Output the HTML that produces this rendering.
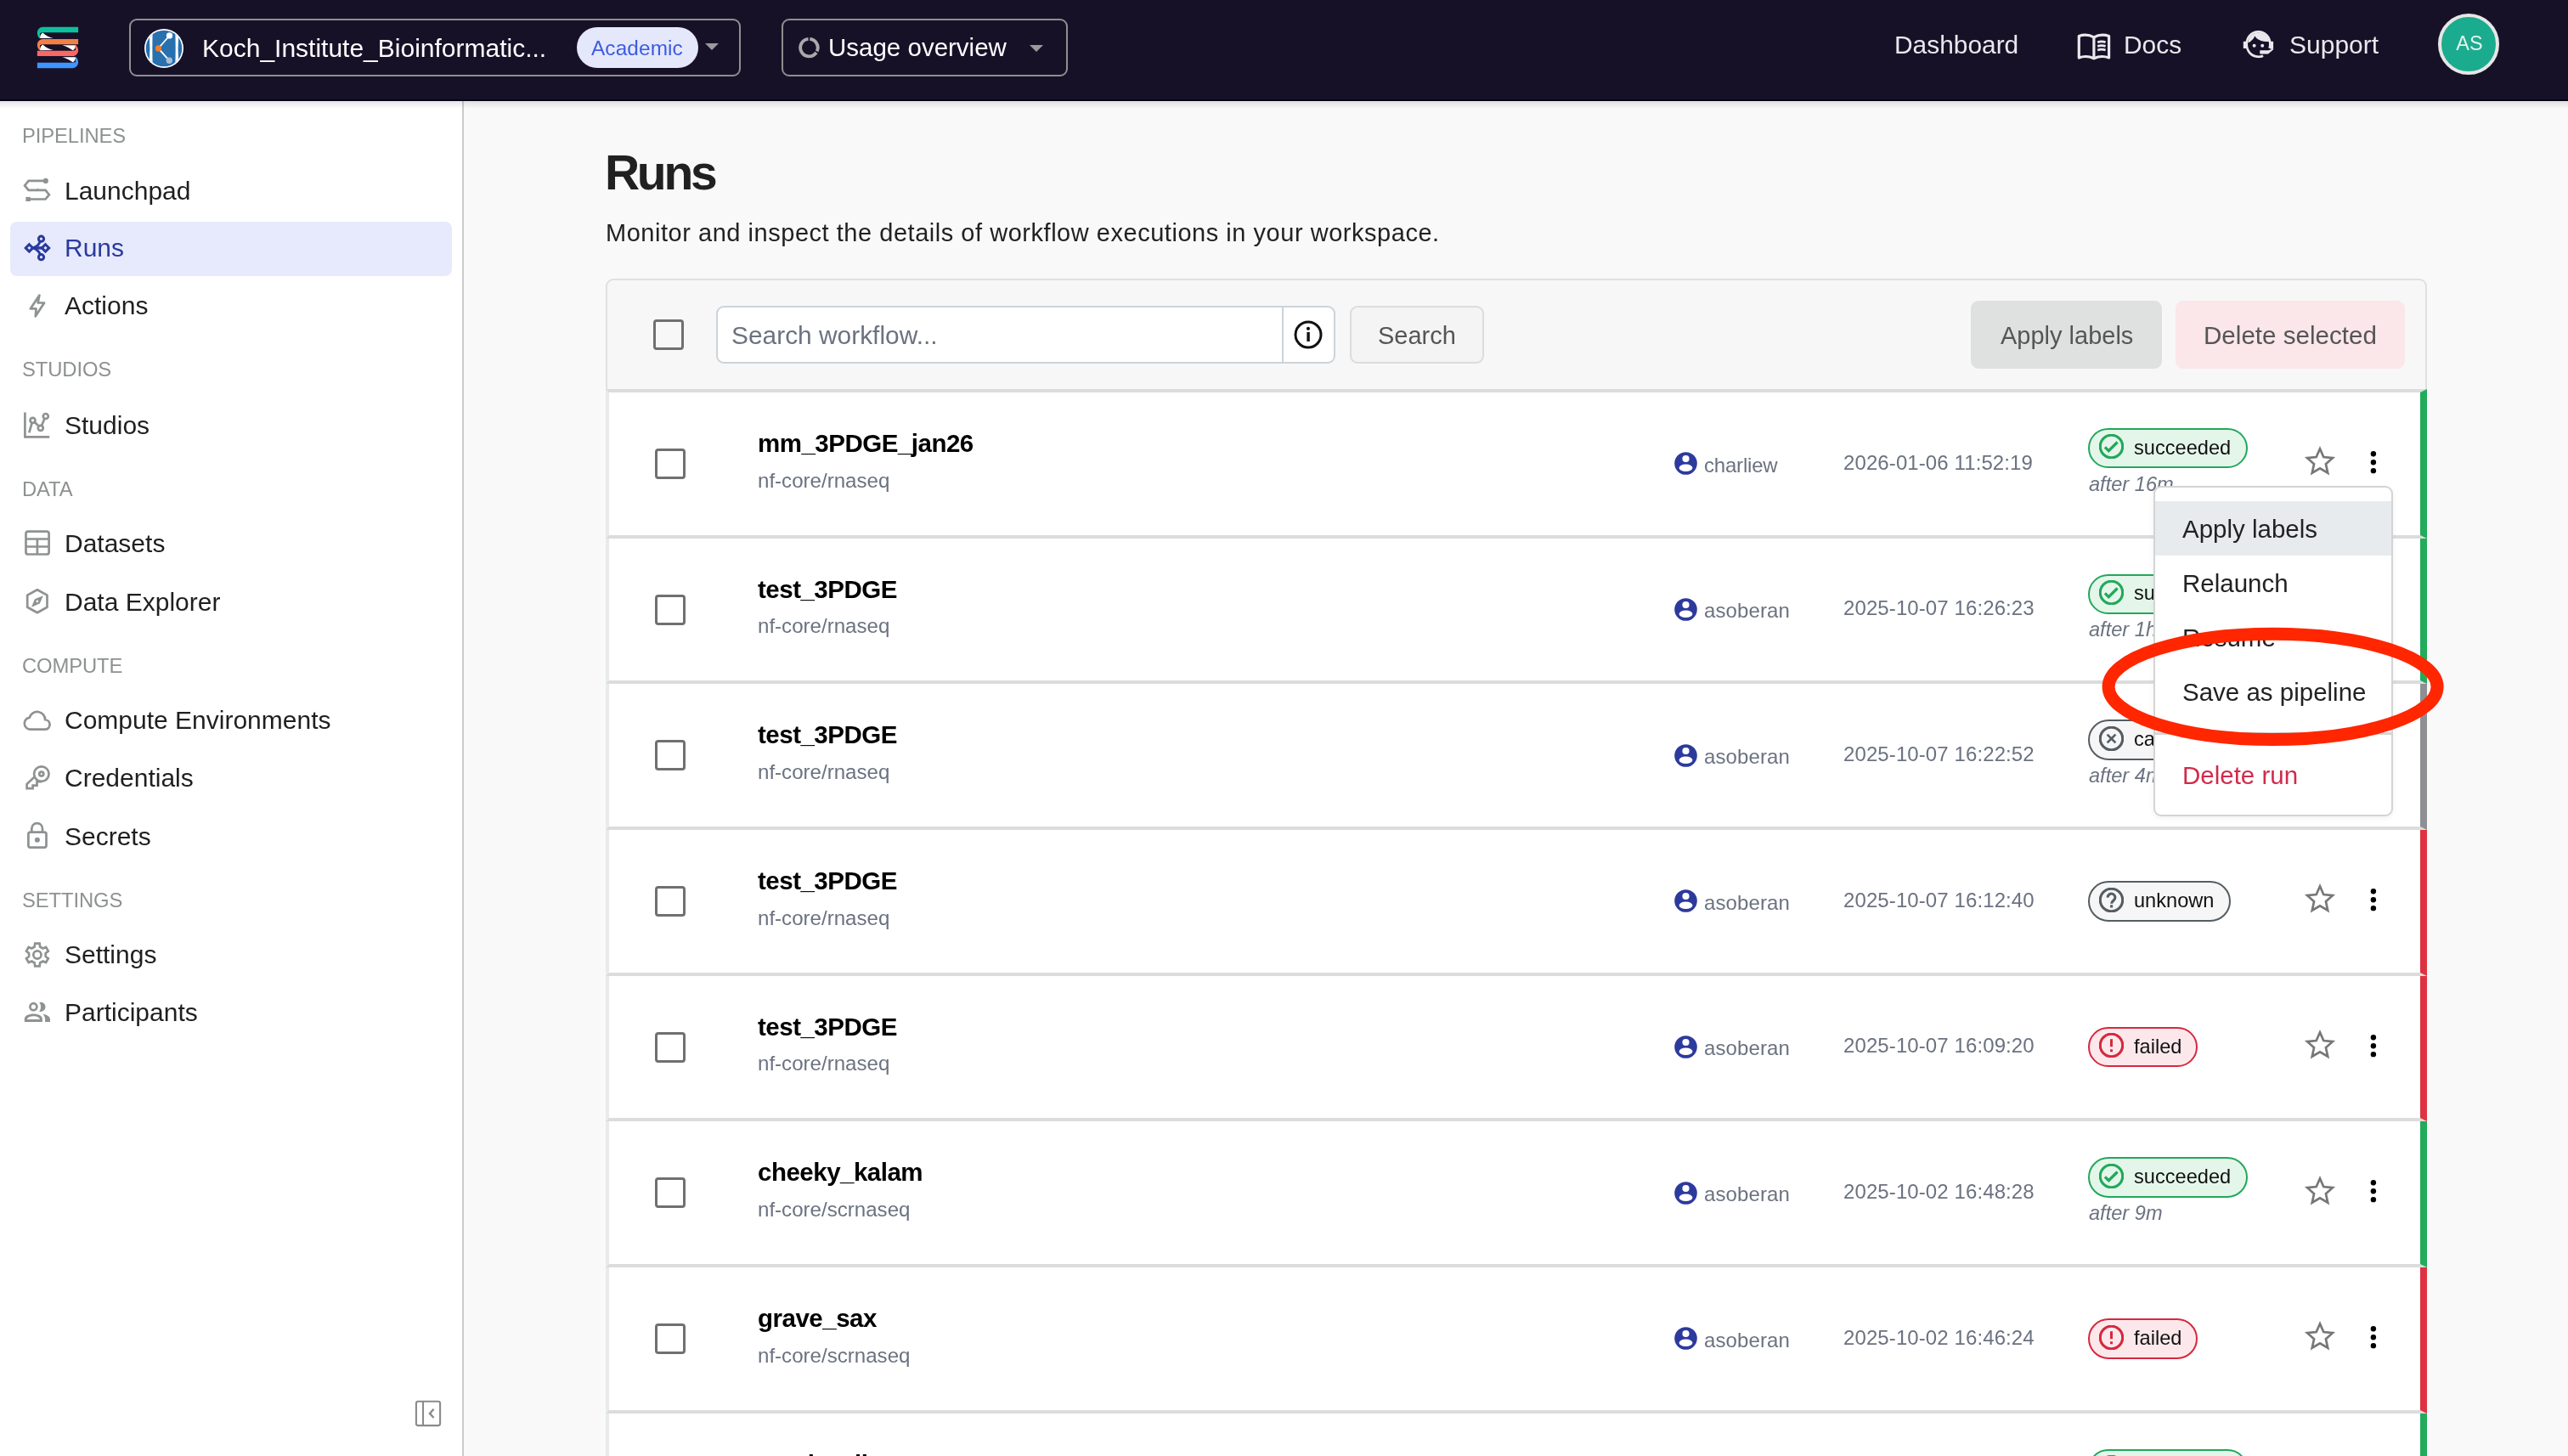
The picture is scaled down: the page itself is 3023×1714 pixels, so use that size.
<!DOCTYPE html>
<html><head><meta charset="utf-8"><style>
html,body{margin:0;padding:0;width:3023px;height:1714px;overflow:hidden;background:#f9f9f9}
.t{position:absolute;white-space:nowrap;line-height:1;font-family:"Liberation Sans", sans-serif;will-change:transform}
svg{display:block}
</style></head><body>
<div style="position:absolute;left:0.00px;top:0.00px;width:3023.00px;height:1714.00px;background:#f9f9f9"></div>
<div style="position:absolute;left:0.00px;top:119.00px;width:544.00px;height:1595.00px;background:#ffffff"></div>
<div style="position:absolute;left:544.00px;top:119.00px;width:2.00px;height:1595.00px;background:#cbcccd"></div>
<div style="position:absolute;left:0.00px;top:119.00px;width:3023.00px;height:9.00px;background:linear-gradient(rgba(0,0,0,0.10),rgba(0,0,0,0))"></div>
<div style="position:absolute;left:0.00px;top:0.00px;width:3023.00px;height:119.00px;background:#171128"></div>
<div style="position:absolute;left:0.00px;top:117.00px;width:3023.00px;height:2.00px;background:#07031a"></div>
<svg style="position:absolute;left:40.00px;top:28.00px;" width="56" height="56" viewBox="0 0 56 56">
<g>
<path d="M52.1 3.85H10.6C6.8 3.85 3.85 6.9 3.85 10.7C3.85 13.6 5.1 16 7 17.3V11.2C7.9 10.5 9.1 10.2 10.6 10.2H52.1Z" fill="#0dc09d"/>
<path d="M10.3 10.4Q15.2 15 22.6 16.95L7.1 17.1Q6.9 12.6 10.3 10.4Z" fill="#ffffff"/>
<path d="M52.1 17.9H10.6C6.8 17.9 3.85 20.95 3.85 24.75C3.85 27.65 5.1 30.05 7 31.35V25.25C7.9 24.55 9.1 24.25 10.6 24.25H52.1Z" fill="#f18046"/>
<path d="M10.3 24.45Q15.2 29.05 22.6 31L7.1 31.15Q6.9 26.65 10.3 24.45Z" fill="#ffffff"/>
<path d="M3.85 38.1H45.4C49.2 38.1 52.1 35.0 52.1 31.2C52.1 28.3 50.9 26.0 49 24.7V30.8C48.1 31.5 46.9 31.7 45.4 31.7H3.85Z" fill="#fa6863"/>
<path d="M33.4 25.15L48.9 25.3Q49.1 29.6 45.7 31.3Q41.2 27.6 33.4 25.15Z" fill="#ffffff"/>
<path d="M3.85 52.15H45.4C49.2 52.15 52.1 49.05 52.1 45.25C52.1 42.35 50.9 40.05 49 38.75V44.85C48.1 45.55 46.9 45.75 45.4 45.75H3.85Z" fill="#3d95fd"/>
<path d="M33.4 39.2L48.9 39.35Q49.1 43.65 45.7 45.35Q41.2 41.65 33.4 39.2Z" fill="#ffffff"/>
</g></svg>
<div style="position:absolute;left:152.00px;top:22.00px;width:720.00px;height:68.00px;box-sizing:border-box;border:2px solid #8f8f8f;border-radius:9px"></div>
<svg style="position:absolute;left:166.00px;top:30.00px;" width="54" height="54" viewBox="0 0 54 54">
<circle cx="27" cy="27" r="23" fill="#ffffff"/>
<clipPath id="oc"><circle cx="27" cy="27" r="21.3"/></clipPath>
<g clip-path="url(#oc)">
<rect x="0" y="0" width="54" height="54" fill="#2870ae"/>
<path d="M8.6 4Q12.2 27 8.6 50L13.8 50Q12.9 27 13.8 4Z" fill="#fff"/>
<path d="M45.4 4Q41.8 27 45.4 50L40.2 50Q41.1 27 40.2 4Z" fill="#fff"/>
</g>
<path d="M33.5 12L20.4 26.9L33.3 41.3" stroke="#fff" stroke-width="1.8" fill="none"/>
<circle cx="20.4" cy="26.9" r="3.6" fill="#f07c2a"/>
<circle cx="33.5" cy="11.9" r="3.7" fill="#ffffff"/>
<circle cx="33.3" cy="41.3" r="3.7" fill="#a9bdd6"/>
</svg>
<div class="t" style="left:238.00px;top:41.91px;font-size:30px;color:#ffffff;font-weight:400;">Koch_Institute_Bioinformatic...</div>
<div style="position:absolute;left:679.00px;top:32.00px;width:143.00px;height:48.00px;background:#e5e8fb;border-radius:24px"></div>
<div class="t" style="left:696.00px;top:44.95px;font-size:24.4px;color:#3d5ce0;font-weight:400;letter-spacing:0.1px">Academic</div>
<svg style="position:absolute;left:828.00px;top:49.00px;" width="20" height="12" viewBox="0 0 20 12"><path d="M2 2H18L10 10Z" fill="#9a9a9a"/></svg>
<div style="position:absolute;left:920.00px;top:22.00px;width:337.00px;height:68.00px;box-sizing:border-box;border:2px solid #8f8f8f;border-radius:9px"></div>
<svg style="position:absolute;left:932.00px;top:36.00px;" width="40" height="40" viewBox="0 0 40 40"><path d="M21.29 9.89A10.25 10.25 0 0 1 29.69 24.43 M28.90 25.83A10.25 10.25 0 1 1 19.51 9.89" stroke="#a8a9ab" stroke-width="3.9" fill="none"/></svg>
<div class="t" style="left:974.50px;top:41.23px;font-size:29.5px;color:#ffffff;font-weight:400;">Usage overview</div>
<svg style="position:absolute;left:1210.00px;top:51.00px;" width="20" height="12" viewBox="0 0 20 12"><path d="M2 2H18L10 10Z" fill="#9a9a9a"/></svg>
<div class="t" style="left:2229.80px;top:37.89px;font-size:29.9px;color:#e9e8ec;font-weight:400;">Dashboard</div>
<svg style="position:absolute;left:2436.00px;top:30.80px;" width="60" height="46" viewBox="0 0 60 46"><g fill="none" stroke="#e9e8ec" stroke-width="3.2" stroke-linejoin="round">
<path d="M11.3 11.5C16.5 9.6 23 9.6 28.9 12.8C34.8 9.6 41.3 9.6 46.6 11.5V37C41.3 35 34.8 35 28.9 37.8C23 35 16.5 35 11.3 37Z"/>
<path d="M28.9 12.8V37.5"/>
<path d="M33.2 18.8C36.3 17.7 39.6 17.7 42.6 18.8M33.2 23.4C36.3 22.3 39.6 22.3 42.6 23.4M33.2 28C36.3 26.9 39.6 26.9 42.6 28" stroke-width="2.8"/>
</g></svg>
<div class="t" style="left:2499.80px;top:37.89px;font-size:29.9px;color:#e9e8ec;font-weight:400;">Docs</div>
<svg style="position:absolute;left:2634.00px;top:28.00px;" width="50" height="48" viewBox="0 0 50 48"><g fill="#e9e8ec">
<path d="M24.5 8C15.6 8 9.4 15.2 9.4 24C9.4 32.8 15.6 40.2 24.5 40.2C27 40.2 28.8 39.8 30.6 39L29.6 36.5C28 37.1 26.4 37.4 24.5 37.4C17.2 37.4 12 31.3 12 24C12 16.7 17.2 10.7 24.5 10.7C31.8 10.7 37 16.7 37 24C37 25.5 36.8 27 36.3 28.4L39 29.3C39.5 27.6 39.8 25.8 39.8 24C39.8 15.2 33.4 8 24.5 8Z"/>
<path d="M12.3 22.6C15.8 21 18.6 18.3 20.3 14.5C23.3 19 28.8 21.2 37 21.1C36.2 14.8 31 10.5 24.5 10.5C18 10.5 12.8 15.2 12.3 22.6Z"/>
<rect x="6.8" y="20.8" width="3.3" height="8.2"/>
<rect x="38.8" y="20.8" width="3.3" height="9"/>
<path d="M26.3 31.2H36.5L42 29.2V30.6L36 35.4H26.3Z"/>
<circle cx="19.6" cy="25.8" r="2"/><circle cx="29.2" cy="25.8" r="2"/>
</g></svg>
<div class="t" style="left:2694.50px;top:37.81px;font-size:30px;color:#e9e8ec;font-weight:400;">Support</div>
<div style="position:absolute;left:2870.00px;top:16.00px;width:72.00px;height:72.00px;box-sizing:border-box;border:4px solid #e6e6e6;border-radius:50%;background:#1bab8e"></div>
<div class="t" style="left:2870.50px;top:40.41px;font-size:23.5px;color:#e3f3ee;font-weight:400;width:72px;text-align:center">AS</div>
<div class="t" style="left:26.00px;top:147.85px;font-size:23.8px;color:#8e9191;font-weight:400;letter-spacing:-0.1px">PIPELINES</div>
<div class="t" style="left:26.00px;top:423.15px;font-size:23.8px;color:#8e9191;font-weight:400;letter-spacing:-0.1px">STUDIOS</div>
<div class="t" style="left:26.00px;top:564.05px;font-size:23.8px;color:#8e9191;font-weight:400;letter-spacing:-0.1px">DATA</div>
<div class="t" style="left:26.00px;top:772.15px;font-size:23.8px;color:#8e9191;font-weight:400;letter-spacing:-0.1px">COMPUTE</div>
<div class="t" style="left:26.00px;top:1047.65px;font-size:23.8px;color:#8e9191;font-weight:400;letter-spacing:-0.1px">SETTINGS</div>
<div style="position:absolute;left:12.00px;top:261.00px;width:520.00px;height:64.00px;background:#e7eafc;border-radius:8px"></div>
<div class="t" style="left:76.00px;top:209.60px;font-size:30px;color:#1f1f1f;font-weight:400;">Launchpad</div>
<div class="t" style="left:76.00px;top:277.21px;font-size:30px;color:#2b3a9e;font-weight:400;">Runs</div>
<div class="t" style="left:76.00px;top:345.00px;font-size:30px;color:#1f1f1f;font-weight:400;">Actions</div>
<div class="t" style="left:76.00px;top:485.81px;font-size:30px;color:#1f1f1f;font-weight:400;">Studios</div>
<div class="t" style="left:76.00px;top:625.11px;font-size:30px;color:#1f1f1f;font-weight:400;">Datasets</div>
<div class="t" style="left:76.00px;top:693.90px;font-size:30px;color:#1f1f1f;font-weight:400;">Data Explorer</div>
<div class="t" style="left:76.00px;top:833.21px;font-size:30px;color:#1f1f1f;font-weight:400;">Compute Environments</div>
<div class="t" style="left:76.00px;top:901.21px;font-size:30px;color:#1f1f1f;font-weight:400;">Credentials</div>
<div class="t" style="left:76.00px;top:969.61px;font-size:30px;color:#1f1f1f;font-weight:400;">Secrets</div>
<div class="t" style="left:76.00px;top:1109.20px;font-size:30px;color:#1f1f1f;font-weight:400;">Settings</div>
<div class="t" style="left:76.00px;top:1177.31px;font-size:30px;color:#1f1f1f;font-weight:400;">Participants</div>
<svg style="position:absolute;left:20.00px;top:200.00px;" width="50" height="50" viewBox="0 0 50 50"><g fill="none" stroke="#8f9292" stroke-width="2.7" stroke-linejoin="miter"><path d="M33 12.9H13.6L9.1 18.4L13.6 23.8H33.5L37.9 29.2L33.5 34.5H15"/></g><circle cx="33.8" cy="12.9" r="3.1" fill="#8f9292"/><rect x="10.4" y="31.9" width="5.4" height="5.1" fill="#8f9292"/><path d="M23.8 21.2L26.5 23.8L23.5 25.5Z" fill="#8f9292"/></svg>
<svg style="position:absolute;left:20.00px;top:268.00px;" width="50" height="50" viewBox="0 0 50 50"><g fill="none" stroke="#2b3a9e" stroke-width="3"><circle cx="28.5" cy="13.2" r="3.1"/><circle cx="28.5" cy="34.7" r="3.1"/><path d="M14.4 19.7L18.6 23.9L14.4 28.1L10.2 23.9Z"/><path d="M33.5 19.7L37.7 23.9L33.5 28.1L29.3 23.9Z"/><path d="M18.6 23.9H29.3" stroke-width="3.4"/><path d="M18.8 23.9C22.5 22.5 26.2 21 27 16.2M18.8 23.9C22.5 25.3 26.2 26.8 27 31.6" stroke-width="3"/></g></svg>
<svg style="position:absolute;left:20.00px;top:340.00px;" width="50" height="50" viewBox="0 0 50 50"><path d="M26.4 7.6L24.6 16.5H32.1L21.8 32.3L22.5 23.4H15.8Z" fill="none" stroke="#8f9292" stroke-width="2.7" stroke-linejoin="round"/></svg>
<svg style="position:absolute;left:20.00px;top:478.00px;" width="50" height="50" viewBox="0 0 50 50"><g fill="none" stroke="#8f9292" stroke-width="2.7"><path d="M9.4 7.4V36.4H38.3"/><path d="M14.3 31.4L17.6 19.8M20.5 18.7L25.8 23.8M29 23.2L32.5 14.6"/><circle cx="18.5" cy="16.8" r="3"/><circle cx="27.8" cy="25.9" r="3"/><circle cx="33.8" cy="12" r="3"/></g></svg>
<svg style="position:absolute;left:20.00px;top:616.00px;" width="50" height="50" viewBox="0 0 50 50"><g fill="none" stroke="#8f9292" stroke-width="2.7"><rect x="10.5" y="9.6" width="27.1" height="26.9" rx="2.6"/><path d="M10.5 18.5H37.6M10.5 27.5H37.6M23.9 18.5V36.5"/></g></svg>
<svg style="position:absolute;left:20.00px;top:684.00px;" width="50" height="50" viewBox="0 0 50 50"><path d="M23.9 10.3L35.5 16.6V30.8L23.9 37.2L12.2 30.8V16.6Z" fill="none" stroke="#8f9292" stroke-width="2.7" stroke-linejoin="round"/><path d="M30.9 17.2L26.8 26.6L17 30.7L20.9 21.3Z" fill="#8f9292"/><circle cx="23.9" cy="23.9" r="1.3" fill="#fff"/></svg>
<svg style="position:absolute;left:20.00px;top:822.00px;" width="50" height="50" viewBox="0 0 50 50"><path d="M15.5 36.7H33.5A5.75 5.75 0 0 0 33.2 25.25A9.4 9.4 0 0 0 14.8 22.6A7.1 7.1 0 0 0 15.5 36.7Z" fill="none" stroke="#8f9292" stroke-width="2.7" stroke-linejoin="miter"/></svg>
<svg style="position:absolute;left:20.00px;top:890.00px;" width="50" height="50" viewBox="0 0 50 50"><g fill="none" stroke="#8f9292" stroke-width="2.7"><circle cx="28.8" cy="21.1" r="8.75"/><circle cx="28.8" cy="21.1" r="2.5"/><path d="M20.9 24.3L11.6 33V38.2H18.6V34.6H23.5V30.1H28.8" stroke-linejoin="miter"/></g></svg>
<svg style="position:absolute;left:20.00px;top:958.00px;" width="50" height="50" viewBox="0 0 50 50"><g fill="none" stroke="#8f9292" stroke-width="2.7"><rect x="13.4" y="21.6" width="21.1" height="18" rx="2.4"/><path d="M17.3 21.6V17.4A6.35 6.35 0 0 1 30 17.4V21.6"/></g><circle cx="23.9" cy="30.7" r="3" fill="#8f9292"/></svg>
<svg style="position:absolute;left:20.00px;top:1100.00px;" width="50" height="50" viewBox="0 0 50 50"><g fill="none" stroke="#8f9292" stroke-width="2.7" stroke-linejoin="miter"><path d="M20.64 14.54L21.19 10.67L26.61 10.67L27.16 14.54L30.46 16.45L34.09 14.99L36.80 19.68L33.72 22.09L33.72 25.91L36.80 28.32L34.09 33.01L30.46 31.55L27.16 33.46L26.61 37.33L21.19 37.33L20.64 33.46L17.34 31.55L13.71 33.01L11.00 28.32L14.08 25.91L14.08 22.09L11.00 19.68L13.71 14.99L17.34 16.45Z"/><circle cx="23.9" cy="24" r="4.6"/></g></svg>
<svg style="position:absolute;left:20.00px;top:1168.00px;" width="50" height="50" viewBox="0 0 50 50"><g fill="#8f9292"><circle cx="19.4" cy="17.2" r="4" fill="none" stroke="#8f9292" stroke-width="2.7"/><path d="M26.3 12A5.6 5.6 0 1 1 26.3 22.7A9.5 9.5 0 0 0 26.3 12Z"/><path d="M8.8 34.9V31.8C8.8 27.8 13.6 25.6 19.4 25.6C25.2 25.6 29.9 27.8 29.9 31.8V34.9ZM11.6 32.1H27.1C26.4 29.6 23.4 28.3 19.4 28.3C15.4 28.3 12.4 29.6 11.6 32.1Z" fill-rule="evenodd"/><path d="M30.2 25.6C35.5 26.5 39 29 39 32V34.9H33.1V32.3C33.1 29.8 32.3 27.5 30.2 25.6Z"/></g></svg>
<svg style="position:absolute;left:480.00px;top:1640.00px;" width="50" height="50" viewBox="0 0 50 50"><g fill="none" stroke="#8a8a8a" stroke-width="2.1"><rect x="9.9" y="9.8" width="28.2" height="28.3" rx="2.4"/><path d="M18 9.8V38.1"/><path d="M30.6 18.7L25.9 23.9L30.6 29" stroke-width="2.4"/></g></svg>
<div class="t" style="left:711.60px;top:174.75px;font-size:57px;color:#212121;font-weight:700;letter-spacing:-3.3px">Runs</div>
<div class="t" style="left:713.00px;top:260.05px;font-size:29px;color:#222222;font-weight:400;letter-spacing:0.53px">Monitor and inspect the details of workflow executions in your workspace.</div>
<div style="position:absolute;left:713.00px;top:328.00px;width:2144.00px;height:132.00px;box-sizing:border-box;background:#f7f7f7;border:2px solid #e0e0e0;border-bottom:none;border-radius:9px 9px 0 0"></div>
<div style="position:absolute;left:769.00px;top:376.00px;width:36.00px;height:36.00px;box-sizing:border-box;border:3.5px solid #707070;border-radius:4px"></div>
<div style="position:absolute;left:843.00px;top:360.00px;width:668.00px;height:67.50px;box-sizing:border-box;background:#fff;border:2px solid #ccd3da;border-radius:9px 0 0 9px"></div>
<div class="t" style="left:860.80px;top:380.09px;font-size:29.9px;color:#6b7280;font-weight:400;">Search workflow...</div>
<div style="position:absolute;left:1509.00px;top:360.00px;width:63.00px;height:67.50px;box-sizing:border-box;background:#fff;border:2px solid #ccd3da;border-radius:0 9px 9px 0"></div>
<svg style="position:absolute;left:1522.00px;top:376.00px;" width="36" height="36" viewBox="0 0 36 36"><circle cx="18" cy="18" r="15" fill="none" stroke="#111" stroke-width="3"/><rect x="16.4" y="15" width="3.4" height="11" fill="#111"/><circle cx="18" cy="10.8" r="2.1" fill="#111"/></svg>
<div style="position:absolute;left:1589.00px;top:360.00px;width:158.00px;height:67.50px;box-sizing:border-box;background:#f4f4f4;border:2px solid #dcdcdc;border-radius:9px"></div>
<div class="t" style="left:1622.00px;top:380.65px;font-size:29px;color:#555555;font-weight:400;">Search</div>
<div style="position:absolute;left:2320.00px;top:354.00px;width:225.00px;height:80.00px;background:#dfe0e0;border-radius:9px"></div>
<div class="t" style="left:2354.50px;top:380.95px;font-size:29px;color:#555555;font-weight:400;">Apply labels</div>
<div style="position:absolute;left:2561.00px;top:354.00px;width:270.00px;height:80.00px;background:#fbe6e9;border-radius:9px"></div>
<div class="t" style="left:2594.00px;top:380.44px;font-size:29.6px;color:#555555;font-weight:400;">Delete selected</div>
<div style="position:absolute;left:713.00px;top:458.00px;width:2144.00px;height:175.67px;box-sizing:border-box;background:#ffffff;border-left:4px solid #e7ebee;border-right:8px solid #22ab5b;border-bottom:4px solid #dcdcdc;border-top:4px solid #dcdcdc"></div>
<div style="position:absolute;left:771.00px;top:528.13px;width:36.00px;height:36.00px;box-sizing:border-box;border:3.5px solid #707070;border-radius:4px"></div>
<div class="t" style="left:892.00px;top:507.06px;font-size:29.5px;color:#000000;font-weight:700;letter-spacing:-0.5px">mm_3PDGE_jan26</div>
<div class="t" style="left:892.00px;top:553.63px;font-size:24.1px;color:#6b7280;font-weight:400;">nf-core/rnaseq</div>
<svg style="position:absolute;left:1971.00px;top:532.33px;" width="27" height="27" viewBox="0 0 27 27"><circle cx="13.5" cy="13.5" r="13.3" fill="#2d3a9d"/><circle cx="13.5" cy="8" r="4.1" fill="#fff"/><ellipse cx="13.5" cy="18.7" rx="7.9" ry="4.3" fill="#fff"/></svg>
<div class="t" style="left:2006.30px;top:535.72px;font-size:24px;color:#6b7280;font-weight:400;letter-spacing:-0.2px">charliew</div>
<div class="t" style="left:2169.80px;top:532.82px;font-size:24px;color:#6b7280;font-weight:400;letter-spacing:0.1px">2026-01-06 11:52:19</div>
<div style="position:absolute;left:2458.00px;top:503.83px;width:188.00px;height:47.50px;box-sizing:border-box;background:#e4f6ea;border:2.6px solid #22a85a;border-radius:24px"></div>
<svg style="position:absolute;left:2471.30px;top:511.33px;" width="29" height="29" viewBox="0 0 29 29"><circle cx="14.5" cy="14.5" r="13.25" fill="none" stroke="#22a85a" stroke-width="3.2"/><path d="M6.9 15.35L11.3 19.65L21.6 9.55" fill="none" stroke="#22a85a" stroke-width="3.3"/></svg>
<div class="t" style="left:2512.40px;top:515.66px;font-size:23.6px;color:#111;font-weight:400;">succeeded</div>
<div class="t" style="left:2458.50px;top:558.66px;font-size:23.6px;color:#6b7280;font-weight:400;font-style:italic">after 16m</div>
<svg style="position:absolute;left:2711.30px;top:524.23px;" width="40" height="40" viewBox="0 0 40 40"><path d="M20.00 4.30L24.29 14.09L34.93 15.15L26.94 22.26L29.23 32.70L20.00 27.30L10.77 32.70L13.06 22.26L5.07 15.15L15.71 14.09Z" fill="none" stroke="#777777" stroke-width="2.7" stroke-miterlimit="10"/></svg>
<svg style="position:absolute;left:2786.80px;top:528.83px;" width="14" height="32" viewBox="0 0 14 32"><circle cx="6.9" cy="5.25" r="3.2" fill="#000"/><circle cx="6.9" cy="15.2" r="3.2" fill="#000"/><circle cx="6.9" cy="25.15" r="3.2" fill="#000"/></svg>
<div style="position:absolute;left:713.00px;top:633.67px;width:2144.00px;height:171.67px;box-sizing:border-box;background:#ffffff;border-left:4px solid #e7ebee;border-right:8px solid #22ab5b;border-bottom:4px solid #dcdcdc"></div>
<div style="position:absolute;left:771.00px;top:699.80px;width:36.00px;height:36.00px;box-sizing:border-box;border:3.5px solid #707070;border-radius:4px"></div>
<div class="t" style="left:892.00px;top:678.73px;font-size:29.5px;color:#000000;font-weight:700;letter-spacing:-0.5px">test_3PDGE</div>
<div class="t" style="left:892.00px;top:725.30px;font-size:24.1px;color:#6b7280;font-weight:400;">nf-core/rnaseq</div>
<svg style="position:absolute;left:1971.00px;top:704.00px;" width="27" height="27" viewBox="0 0 27 27"><circle cx="13.5" cy="13.5" r="13.3" fill="#2d3a9d"/><circle cx="13.5" cy="8" r="4.1" fill="#fff"/><ellipse cx="13.5" cy="18.7" rx="7.9" ry="4.3" fill="#fff"/></svg>
<div class="t" style="left:2006.30px;top:707.38px;font-size:24px;color:#6b7280;font-weight:400;letter-spacing:0.1px">asoberan</div>
<div class="t" style="left:2169.80px;top:704.48px;font-size:24px;color:#6b7280;font-weight:400;letter-spacing:0.1px">2025-10-07 16:26:23</div>
<div style="position:absolute;left:2458.00px;top:675.50px;width:188.00px;height:47.50px;box-sizing:border-box;background:#e4f6ea;border:2.6px solid #22a85a;border-radius:24px"></div>
<svg style="position:absolute;left:2471.30px;top:683.00px;" width="29" height="29" viewBox="0 0 29 29"><circle cx="14.5" cy="14.5" r="13.25" fill="none" stroke="#22a85a" stroke-width="3.2"/><path d="M6.9 15.35L11.3 19.65L21.6 9.55" fill="none" stroke="#22a85a" stroke-width="3.3"/></svg>
<div class="t" style="left:2512.40px;top:687.32px;font-size:23.6px;color:#111;font-weight:400;">succeeded</div>
<div class="t" style="left:2458.50px;top:730.32px;font-size:23.6px;color:#6b7280;font-weight:400;font-style:italic">after 1h</div>
<svg style="position:absolute;left:2711.30px;top:695.90px;" width="40" height="40" viewBox="0 0 40 40"><path d="M20.00 4.30L24.29 14.09L34.93 15.15L26.94 22.26L29.23 32.70L20.00 27.30L10.77 32.70L13.06 22.26L5.07 15.15L15.71 14.09Z" fill="none" stroke="#777777" stroke-width="2.7" stroke-miterlimit="10"/></svg>
<svg style="position:absolute;left:2786.80px;top:700.50px;" width="14" height="32" viewBox="0 0 14 32"><circle cx="6.9" cy="5.25" r="3.2" fill="#000"/><circle cx="6.9" cy="15.2" r="3.2" fill="#000"/><circle cx="6.9" cy="25.15" r="3.2" fill="#000"/></svg>
<div style="position:absolute;left:713.00px;top:805.33px;width:2144.00px;height:171.67px;box-sizing:border-box;background:#ffffff;border-left:4px solid #e7ebee;border-right:8px solid #8e8f93;border-bottom:4px solid #dcdcdc"></div>
<div style="position:absolute;left:771.00px;top:871.47px;width:36.00px;height:36.00px;box-sizing:border-box;border:3.5px solid #707070;border-radius:4px"></div>
<div class="t" style="left:892.00px;top:850.39px;font-size:29.5px;color:#000000;font-weight:700;letter-spacing:-0.5px">test_3PDGE</div>
<div class="t" style="left:892.00px;top:896.97px;font-size:24.1px;color:#6b7280;font-weight:400;">nf-core/rnaseq</div>
<svg style="position:absolute;left:1971.00px;top:875.67px;" width="27" height="27" viewBox="0 0 27 27"><circle cx="13.5" cy="13.5" r="13.3" fill="#2d3a9d"/><circle cx="13.5" cy="8" r="4.1" fill="#fff"/><ellipse cx="13.5" cy="18.7" rx="7.9" ry="4.3" fill="#fff"/></svg>
<div class="t" style="left:2006.30px;top:879.05px;font-size:24px;color:#6b7280;font-weight:400;letter-spacing:0.1px">asoberan</div>
<div class="t" style="left:2169.80px;top:876.15px;font-size:24px;color:#6b7280;font-weight:400;letter-spacing:0.1px">2025-10-07 16:22:52</div>
<div style="position:absolute;left:2458.00px;top:847.17px;width:186.00px;height:47.50px;box-sizing:border-box;background:#f6f6f6;border:2.6px solid #555d63;border-radius:24px"></div>
<svg style="position:absolute;left:2471.30px;top:854.67px;" width="29" height="29" viewBox="0 0 29 29"><circle cx="14.5" cy="14.5" r="13.25" fill="none" stroke="#555d63" stroke-width="3.2"/><path d="M9.6 9.6L19.4 19.4M19.4 9.6L9.6 19.4" fill="none" stroke="#555d63" stroke-width="2.7"/></svg>
<div class="t" style="left:2512.40px;top:858.99px;font-size:23.6px;color:#111;font-weight:400;">cancelled</div>
<div class="t" style="left:2458.50px;top:901.99px;font-size:23.6px;color:#6b7280;font-weight:400;font-style:italic">after 4m</div>
<svg style="position:absolute;left:2711.30px;top:867.57px;" width="40" height="40" viewBox="0 0 40 40"><path d="M20.00 4.30L24.29 14.09L34.93 15.15L26.94 22.26L29.23 32.70L20.00 27.30L10.77 32.70L13.06 22.26L5.07 15.15L15.71 14.09Z" fill="none" stroke="#777777" stroke-width="2.7" stroke-miterlimit="10"/></svg>
<svg style="position:absolute;left:2786.80px;top:872.17px;" width="14" height="32" viewBox="0 0 14 32"><circle cx="6.9" cy="5.25" r="3.2" fill="#000"/><circle cx="6.9" cy="15.2" r="3.2" fill="#000"/><circle cx="6.9" cy="25.15" r="3.2" fill="#000"/></svg>
<div style="position:absolute;left:713.00px;top:977.00px;width:2144.00px;height:171.67px;box-sizing:border-box;background:#ffffff;border-left:4px solid #e7ebee;border-right:8px solid #de3242;border-bottom:4px solid #dcdcdc"></div>
<div style="position:absolute;left:771.00px;top:1043.13px;width:36.00px;height:36.00px;box-sizing:border-box;border:3.5px solid #707070;border-radius:4px"></div>
<div class="t" style="left:892.00px;top:1022.06px;font-size:29.5px;color:#000000;font-weight:700;letter-spacing:-0.5px">test_3PDGE</div>
<div class="t" style="left:892.00px;top:1068.63px;font-size:24.1px;color:#6b7280;font-weight:400;">nf-core/rnaseq</div>
<svg style="position:absolute;left:1971.00px;top:1047.33px;" width="27" height="27" viewBox="0 0 27 27"><circle cx="13.5" cy="13.5" r="13.3" fill="#2d3a9d"/><circle cx="13.5" cy="8" r="4.1" fill="#fff"/><ellipse cx="13.5" cy="18.7" rx="7.9" ry="4.3" fill="#fff"/></svg>
<div class="t" style="left:2006.30px;top:1050.72px;font-size:24px;color:#6b7280;font-weight:400;letter-spacing:0.1px">asoberan</div>
<div class="t" style="left:2169.80px;top:1047.82px;font-size:24px;color:#6b7280;font-weight:400;letter-spacing:0.1px">2025-10-07 16:12:40</div>
<div style="position:absolute;left:2458.00px;top:1037.08px;width:167.50px;height:47.50px;box-sizing:border-box;background:#f6f6f6;border:2.6px solid #555d63;border-radius:24px"></div>
<svg style="position:absolute;left:2471.30px;top:1044.58px;" width="29" height="29" viewBox="0 0 29 29"><circle cx="14.5" cy="14.5" r="13.25" fill="none" stroke="#555d63" stroke-width="3.2"/><path d="M10.2 11.6A4.35 4.35 0 1 1 17.6 14.5C15.8 16.1 14.6 16.9 14.6 18.8" fill="none" stroke="#555d63" stroke-width="3.1"/><rect x="13.05" y="20.3" width="3.1" height="3.2" fill="#555d63"/></svg>
<div class="t" style="left:2512.40px;top:1048.91px;font-size:23.6px;color:#111;font-weight:400;">unknown</div>
<svg style="position:absolute;left:2711.30px;top:1039.23px;" width="40" height="40" viewBox="0 0 40 40"><path d="M20.00 4.30L24.29 14.09L34.93 15.15L26.94 22.26L29.23 32.70L20.00 27.30L10.77 32.70L13.06 22.26L5.07 15.15L15.71 14.09Z" fill="none" stroke="#777777" stroke-width="2.7" stroke-miterlimit="10"/></svg>
<svg style="position:absolute;left:2786.80px;top:1043.83px;" width="14" height="32" viewBox="0 0 14 32"><circle cx="6.9" cy="5.25" r="3.2" fill="#000"/><circle cx="6.9" cy="15.2" r="3.2" fill="#000"/><circle cx="6.9" cy="25.15" r="3.2" fill="#000"/></svg>
<div style="position:absolute;left:713.00px;top:1148.67px;width:2144.00px;height:171.67px;box-sizing:border-box;background:#ffffff;border-left:4px solid #e7ebee;border-right:8px solid #de3242;border-bottom:4px solid #dcdcdc"></div>
<div style="position:absolute;left:771.00px;top:1214.80px;width:36.00px;height:36.00px;box-sizing:border-box;border:3.5px solid #707070;border-radius:4px"></div>
<div class="t" style="left:892.00px;top:1193.73px;font-size:29.5px;color:#000000;font-weight:700;letter-spacing:-0.5px">test_3PDGE</div>
<div class="t" style="left:892.00px;top:1240.30px;font-size:24.1px;color:#6b7280;font-weight:400;">nf-core/rnaseq</div>
<svg style="position:absolute;left:1971.00px;top:1219.00px;" width="27" height="27" viewBox="0 0 27 27"><circle cx="13.5" cy="13.5" r="13.3" fill="#2d3a9d"/><circle cx="13.5" cy="8" r="4.1" fill="#fff"/><ellipse cx="13.5" cy="18.7" rx="7.9" ry="4.3" fill="#fff"/></svg>
<div class="t" style="left:2006.30px;top:1222.38px;font-size:24px;color:#6b7280;font-weight:400;letter-spacing:0.1px">asoberan</div>
<div class="t" style="left:2169.80px;top:1219.48px;font-size:24px;color:#6b7280;font-weight:400;letter-spacing:0.1px">2025-10-07 16:09:20</div>
<div style="position:absolute;left:2458.00px;top:1208.75px;width:128.70px;height:47.50px;box-sizing:border-box;background:#fce8eb;border:2.6px solid #d6283f;border-radius:24px"></div>
<svg style="position:absolute;left:2471.30px;top:1216.25px;" width="29" height="29" viewBox="0 0 29 29"><circle cx="14.5" cy="14.5" r="13.25" fill="none" stroke="#d6283f" stroke-width="3.2"/><rect x="13" y="7.2" width="3" height="9" fill="#d6283f"/><rect x="13" y="19.3" width="3" height="2.9" fill="#d6283f"/></svg>
<div class="t" style="left:2512.40px;top:1220.57px;font-size:23.6px;color:#111;font-weight:400;">failed</div>
<svg style="position:absolute;left:2711.30px;top:1210.90px;" width="40" height="40" viewBox="0 0 40 40"><path d="M20.00 4.30L24.29 14.09L34.93 15.15L26.94 22.26L29.23 32.70L20.00 27.30L10.77 32.70L13.06 22.26L5.07 15.15L15.71 14.09Z" fill="none" stroke="#777777" stroke-width="2.7" stroke-miterlimit="10"/></svg>
<svg style="position:absolute;left:2786.80px;top:1215.50px;" width="14" height="32" viewBox="0 0 14 32"><circle cx="6.9" cy="5.25" r="3.2" fill="#000"/><circle cx="6.9" cy="15.2" r="3.2" fill="#000"/><circle cx="6.9" cy="25.15" r="3.2" fill="#000"/></svg>
<div style="position:absolute;left:713.00px;top:1320.33px;width:2144.00px;height:171.67px;box-sizing:border-box;background:#ffffff;border-left:4px solid #e7ebee;border-right:8px solid #22ab5b;border-bottom:4px solid #dcdcdc"></div>
<div style="position:absolute;left:771.00px;top:1386.47px;width:36.00px;height:36.00px;box-sizing:border-box;border:3.5px solid #707070;border-radius:4px"></div>
<div class="t" style="left:892.00px;top:1365.39px;font-size:29.5px;color:#000000;font-weight:700;letter-spacing:-0.5px">cheeky_kalam</div>
<div class="t" style="left:892.00px;top:1411.97px;font-size:24.1px;color:#6b7280;font-weight:400;">nf-core/scrnaseq</div>
<svg style="position:absolute;left:1971.00px;top:1390.67px;" width="27" height="27" viewBox="0 0 27 27"><circle cx="13.5" cy="13.5" r="13.3" fill="#2d3a9d"/><circle cx="13.5" cy="8" r="4.1" fill="#fff"/><ellipse cx="13.5" cy="18.7" rx="7.9" ry="4.3" fill="#fff"/></svg>
<div class="t" style="left:2006.30px;top:1394.05px;font-size:24px;color:#6b7280;font-weight:400;letter-spacing:0.1px">asoberan</div>
<div class="t" style="left:2169.80px;top:1391.15px;font-size:24px;color:#6b7280;font-weight:400;letter-spacing:0.1px">2025-10-02 16:48:28</div>
<div style="position:absolute;left:2458.00px;top:1362.17px;width:188.00px;height:47.50px;box-sizing:border-box;background:#e4f6ea;border:2.6px solid #22a85a;border-radius:24px"></div>
<svg style="position:absolute;left:2471.30px;top:1369.67px;" width="29" height="29" viewBox="0 0 29 29"><circle cx="14.5" cy="14.5" r="13.25" fill="none" stroke="#22a85a" stroke-width="3.2"/><path d="M6.9 15.35L11.3 19.65L21.6 9.55" fill="none" stroke="#22a85a" stroke-width="3.3"/></svg>
<div class="t" style="left:2512.40px;top:1373.99px;font-size:23.6px;color:#111;font-weight:400;">succeeded</div>
<div class="t" style="left:2458.50px;top:1416.99px;font-size:23.6px;color:#6b7280;font-weight:400;font-style:italic">after 9m</div>
<svg style="position:absolute;left:2711.30px;top:1382.57px;" width="40" height="40" viewBox="0 0 40 40"><path d="M20.00 4.30L24.29 14.09L34.93 15.15L26.94 22.26L29.23 32.70L20.00 27.30L10.77 32.70L13.06 22.26L5.07 15.15L15.71 14.09Z" fill="none" stroke="#777777" stroke-width="2.7" stroke-miterlimit="10"/></svg>
<svg style="position:absolute;left:2786.80px;top:1387.17px;" width="14" height="32" viewBox="0 0 14 32"><circle cx="6.9" cy="5.25" r="3.2" fill="#000"/><circle cx="6.9" cy="15.2" r="3.2" fill="#000"/><circle cx="6.9" cy="25.15" r="3.2" fill="#000"/></svg>
<div style="position:absolute;left:713.00px;top:1492.00px;width:2144.00px;height:171.67px;box-sizing:border-box;background:#ffffff;border-left:4px solid #e7ebee;border-right:8px solid #de3242;border-bottom:4px solid #dcdcdc"></div>
<div style="position:absolute;left:771.00px;top:1558.13px;width:36.00px;height:36.00px;box-sizing:border-box;border:3.5px solid #707070;border-radius:4px"></div>
<div class="t" style="left:892.00px;top:1537.06px;font-size:29.5px;color:#000000;font-weight:700;letter-spacing:-0.5px">grave_sax</div>
<div class="t" style="left:892.00px;top:1583.63px;font-size:24.1px;color:#6b7280;font-weight:400;">nf-core/scrnaseq</div>
<svg style="position:absolute;left:1971.00px;top:1562.33px;" width="27" height="27" viewBox="0 0 27 27"><circle cx="13.5" cy="13.5" r="13.3" fill="#2d3a9d"/><circle cx="13.5" cy="8" r="4.1" fill="#fff"/><ellipse cx="13.5" cy="18.7" rx="7.9" ry="4.3" fill="#fff"/></svg>
<div class="t" style="left:2006.30px;top:1565.72px;font-size:24px;color:#6b7280;font-weight:400;letter-spacing:0.1px">asoberan</div>
<div class="t" style="left:2169.80px;top:1562.82px;font-size:24px;color:#6b7280;font-weight:400;letter-spacing:0.1px">2025-10-02 16:46:24</div>
<div style="position:absolute;left:2458.00px;top:1552.08px;width:128.70px;height:47.50px;box-sizing:border-box;background:#fce8eb;border:2.6px solid #d6283f;border-radius:24px"></div>
<svg style="position:absolute;left:2471.30px;top:1559.58px;" width="29" height="29" viewBox="0 0 29 29"><circle cx="14.5" cy="14.5" r="13.25" fill="none" stroke="#d6283f" stroke-width="3.2"/><rect x="13" y="7.2" width="3" height="9" fill="#d6283f"/><rect x="13" y="19.3" width="3" height="2.9" fill="#d6283f"/></svg>
<div class="t" style="left:2512.40px;top:1563.91px;font-size:23.6px;color:#111;font-weight:400;">failed</div>
<svg style="position:absolute;left:2711.30px;top:1554.23px;" width="40" height="40" viewBox="0 0 40 40"><path d="M20.00 4.30L24.29 14.09L34.93 15.15L26.94 22.26L29.23 32.70L20.00 27.30L10.77 32.70L13.06 22.26L5.07 15.15L15.71 14.09Z" fill="none" stroke="#777777" stroke-width="2.7" stroke-miterlimit="10"/></svg>
<svg style="position:absolute;left:2786.80px;top:1558.83px;" width="14" height="32" viewBox="0 0 14 32"><circle cx="6.9" cy="5.25" r="3.2" fill="#000"/><circle cx="6.9" cy="15.2" r="3.2" fill="#000"/><circle cx="6.9" cy="25.15" r="3.2" fill="#000"/></svg>
<div style="position:absolute;left:713.00px;top:1663.67px;width:2144.00px;height:171.67px;box-sizing:border-box;background:#ffffff;border-left:4px solid #e7ebee;border-right:8px solid #22ab5b;border-bottom:4px solid #dcdcdc"></div>
<div style="position:absolute;left:771.00px;top:1729.80px;width:36.00px;height:36.00px;box-sizing:border-box;border:3.5px solid #707070;border-radius:4px"></div>
<div class="t" style="left:892.00px;top:1708.73px;font-size:29.5px;color:#000000;font-weight:700;letter-spacing:-0.5px">exotic_allen</div>
<div class="t" style="left:892.00px;top:1755.30px;font-size:24.1px;color:#6b7280;font-weight:400;">nf-core/rnaseq</div>
<svg style="position:absolute;left:1971.00px;top:1734.00px;" width="27" height="27" viewBox="0 0 27 27"><circle cx="13.5" cy="13.5" r="13.3" fill="#2d3a9d"/><circle cx="13.5" cy="8" r="4.1" fill="#fff"/><ellipse cx="13.5" cy="18.7" rx="7.9" ry="4.3" fill="#fff"/></svg>
<div class="t" style="left:2006.30px;top:1737.38px;font-size:24px;color:#6b7280;font-weight:400;letter-spacing:0.1px">asoberan</div>
<div class="t" style="left:2169.80px;top:1734.48px;font-size:24px;color:#6b7280;font-weight:400;letter-spacing:0.1px">2025-10-02 16:40:11</div>
<div style="position:absolute;left:2458.00px;top:1705.50px;width:188.00px;height:47.50px;box-sizing:border-box;background:#e4f6ea;border:2.6px solid #22a85a;border-radius:24px"></div>
<svg style="position:absolute;left:2471.30px;top:1713.00px;" width="29" height="29" viewBox="0 0 29 29"><circle cx="14.5" cy="14.5" r="13.25" fill="none" stroke="#22a85a" stroke-width="3.2"/><path d="M6.9 15.35L11.3 19.65L21.6 9.55" fill="none" stroke="#22a85a" stroke-width="3.3"/></svg>
<div class="t" style="left:2512.40px;top:1717.32px;font-size:23.6px;color:#111;font-weight:400;">succeeded</div>
<div class="t" style="left:2458.50px;top:1760.32px;font-size:23.6px;color:#6b7280;font-weight:400;font-style:italic">after 12m</div>
<svg style="position:absolute;left:2711.30px;top:1725.90px;" width="40" height="40" viewBox="0 0 40 40"><path d="M20.00 4.30L24.29 14.09L34.93 15.15L26.94 22.26L29.23 32.70L20.00 27.30L10.77 32.70L13.06 22.26L5.07 15.15L15.71 14.09Z" fill="none" stroke="#777777" stroke-width="2.7" stroke-miterlimit="10"/></svg>
<svg style="position:absolute;left:2786.80px;top:1730.50px;" width="14" height="32" viewBox="0 0 14 32"><circle cx="6.9" cy="5.25" r="3.2" fill="#000"/><circle cx="6.9" cy="15.2" r="3.2" fill="#000"/><circle cx="6.9" cy="25.15" r="3.2" fill="#000"/></svg>
<div style="position:absolute;left:2535.00px;top:572.00px;width:282.00px;height:389.00px;box-sizing:border-box;background:#fff;border:2px solid #d4d4d4;border-radius:9px;box-shadow:0 2px 6px rgba(0,0,0,0.06)"></div>
<div style="position:absolute;left:2537.00px;top:590.00px;width:278.00px;height:64.00px;background:#e8ebee"></div>
<div class="t" style="left:2569.30px;top:607.83px;font-size:29.5px;color:#222;font-weight:400;">Apply labels</div>
<div class="t" style="left:2569.30px;top:671.73px;font-size:29.5px;color:#222;font-weight:400;">Relaunch</div>
<div class="t" style="left:2569.30px;top:735.63px;font-size:29.5px;color:#222;font-weight:400;">Resume</div>
<div class="t" style="left:2569.30px;top:799.53px;font-size:29.5px;color:#222;font-weight:400;">Save as pipeline</div>
<div class="t" style="left:2569.30px;top:897.73px;font-size:29.5px;color:#d12b4a;font-weight:400;">Delete run</div>
<div style="position:absolute;left:2537.00px;top:862.00px;width:278.00px;height:2.50px;background:#d4d4d4"></div>
<svg style="position:absolute;left:2460.00px;top:725.00px;" width="430" height="170" viewBox="0 0 430 170"><ellipse cx="215.6" cy="83.4" rx="193.5" ry="62.2" fill="none" stroke="#ff2600" stroke-width="15"/></svg>
</body></html>
